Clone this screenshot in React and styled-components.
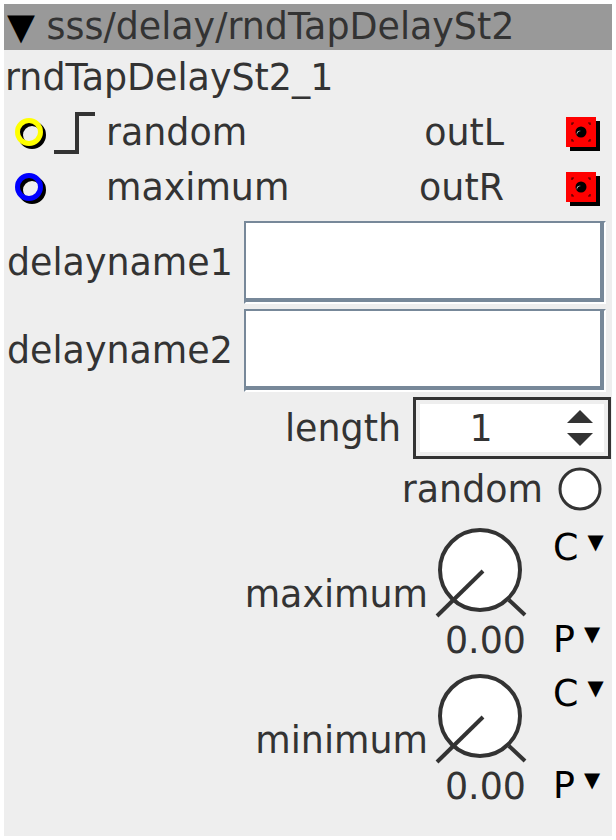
import styled, { createGlobalStyle } from 'styled-components'

const Global = createGlobalStyle`
  body {
    margin: 4px;
    background: #ffffff;
    font-family: "DejaVu Sans", "Noto Sans", sans-serif;
  }
`

const Panel = styled.div`
  width: 608px;
  height: 832px;
  background: #eeeeee;
  color: #333333;
  font-size: 36.4px;
  display: flex;
  flex-direction: column;
  overflow: hidden;
`

const Header = styled.div`
  height: 46px;
  line-height: 46px;
  background: #999999;
  padding-left: 3px;
  white-space: nowrap;
`

const Arrow = styled.span`
  color: #000000;
`

const Title = styled.div`
  height: 55px;
  line-height: 55px;
  padding-left: 1px;
`

const PortRow = styled.div`
  height: 55px;
  display: flex;
  align-items: center;
  padding: 0 10px 0 6px;
`

const PortIcon = styled.svg`
  flex: none;
  width: ${p => p.$w}px;
  height: ${p => p.$h}px;
  margin-left: ${p => p.$ml || 0}px;
`

const PortLabel = styled.span`
  margin-left: ${p => p.$ml || 0}px;
  margin-right: ${p => p.$mr || 0}px;
`

const Spacer = styled.div`
  flex: 1;
`

const Fields = styled.div`
  display: flex;
  flex-direction: column;
  gap: 5px;
  padding: 6px 6px 0 3px;
`

const FieldRow = styled.div`
  display: flex;
  align-items: center;
  justify-content: space-between;
`

const TextBox = styled.input`
  box-sizing: border-box;
  width: 362px;
  height: 83px;
  background: #ffffff;
  border: 2px solid;
  border-color: #778899 #ffffff #ffffff #778899;
  box-shadow: inset -4px -4px 0 #778899;
  outline: none;
  font: inherit;
`

const RightRow = styled.div`
  display: flex;
  justify-content: flex-end;
  align-items: center;
  gap: ${p => p.$gap}px;
  margin-top: ${p => p.$mt}px;
  padding-right: ${p => p.$pr}px;
  height: ${p => p.$h}px;
`

const SpinBox = styled.div`
  box-sizing: border-box;
  width: 198px;
  height: 62px;
  border: 3px solid #333333;
  background: #ffffff;
  box-shadow: inset 0 0 0 4px #eeeeee;
  display: flex;
  align-items: center;
  padding-right: 14px;
`

const SpinValue = styled.span`
  flex: 1;
  text-align: center;
  padding-right: 20px;
`

const KnobRow = styled.div`
  display: flex;
  justify-content: flex-end;
  align-items: center;
  height: 132px;
  margin-top: ${p => p.$mt}px;
  padding-right: 7px;
`

const KnobLabel = styled.span`
  margin-right: 6px;
`

const KnobCol = styled.div`
  display: flex;
  flex-direction: column;
  align-items: flex-end;
`

const KnobValue = styled.span`
  line-height: 40px;
  padding-right: 4px;
  margin-top: 2px;
`

const ModCol = styled.div`
  height: 132px;
  width: 52px;
  margin-left: 23px;
  display: flex;
  flex-direction: column;
  justify-content: space-between;
  color: #000000;
`

const Mod = styled.div`
  line-height: 40px;
  white-space: nowrap;
`

const ModArrow = styled.span`
  font-size: 21px;
  vertical-align: top;
  line-height: 28px;
  margin-left: 9px;
`

const InPort = ({ color }) => (
  <PortIcon $w={36} $h={36} $ml={4} viewBox="0 0 36 36">
    <circle cx="18" cy="20" r="11.5" fill="none" stroke="#000" strokeWidth="5" />
    <circle cx="15" cy="17" r="11.5" fill="none" stroke={color} strokeWidth="5" />
  </PortIcon>
)

const OutPort = () => (
  <PortIcon $w={36} $h={36} viewBox="0 0 36 36">
    <rect x="4" y="6" width="30" height="30" fill="#000" />
    <rect x="0" y="2" width="30" height="30" fill="#ff0000" />
    <path d="M6 10V8h2 M22 8h2v2 M6 24v2h2 M22 26h2v-2" stroke="#400" strokeWidth="1.2" fill="none" />
    <circle cx="15" cy="17" r="5.5" fill="#000" />
    <path d="M11 20 A4 4 0 0 1 15 16 A3 3 0 0 0 11 20z" fill="#fff" />
  </PortIcon>
)

const Knob = ({ label }) => (
  <>
    <KnobLabel>{label}</KnobLabel>
    <KnobCol>
      <svg width="96" height="92" viewBox="0 0 96 92">
        <circle cx="46" cy="43" r="40" fill="#fff" stroke="#333" strokeWidth="4" />
        <line x1="49" y1="44" x2="3" y2="89" stroke="#333" strokeWidth="4" />
        <line x1="75" y1="73" x2="91" y2="88" stroke="#333" strokeWidth="4" />
      </svg>
      <KnobValue>0.00</KnobValue>
    </KnobCol>
    <ModCol>
      <Mod>C<ModArrow>▼</ModArrow></Mod>
      <Mod>P<ModArrow>▼</ModArrow></Mod>
    </ModCol>
  </>
)

export default function App() {
  return (
    <>
      <Global />
      <Panel>
        <Header><Arrow>▼</Arrow> sss/delay/rndTapDelaySt2</Header>
        <Title>rndTapDelaySt2_1</Title>

        <PortRow>
          <InPort color="#ffff00" />
          <PortIcon $w={44} $h={46} $ml={2} viewBox="0 0 44 46">
            <path d="M2 42H25V4H43" fill="none" stroke="#333" strokeWidth="4" />
          </PortIcon>
          <PortLabel $ml={10}>random</PortLabel>
          <Spacer />
          <PortLabel $mr={62}>outL</PortLabel>
          <OutPort />
        </PortRow>
        <PortRow>
          <InPort color="#0000ff" />
          <PortIcon $w={44} $h={46} $ml={2} />
          <PortLabel $ml={10}>maximum</PortLabel>
          <Spacer />
          <PortLabel $mr={62}>outR</PortLabel>
          <OutPort />
        </PortRow>

        <Fields>
          <FieldRow>
            <span>delayname1</span>
            <TextBox />
          </FieldRow>
          <FieldRow>
            <span>delayname2</span>
            <TextBox />
          </FieldRow>
        </Fields>

        <RightRow $gap={12} $mt={5} $pr={1} $h={62}>
          <span>length</span>
          <SpinBox>
            <SpinValue>1</SpinValue>
            <svg width="28" height="38" viewBox="0 0 28 38">
              <path d="M1 14L14 1L27 14Z" fill="#333" />
              <path d="M1 24L14 37L27 24Z" fill="#333" />
            </svg>
          </SpinBox>
        </RightRow>

        <RightRow $gap={14} $mt={8} $pr={9} $h={44}>
          <span>random</span>
          <svg width="46" height="46" viewBox="0 0 46 46">
            <circle cx="23" cy="23" r="20" fill="#fff" stroke="#333" strokeWidth="3" />
          </svg>
        </RightRow>

        <KnobRow $mt={17}>
          <Knob label="maximum" />
        </KnobRow>
        <KnobRow $mt={14}>
          <Knob label="minimum" />
        </KnobRow>
      </Panel>
    </>
  )
}
